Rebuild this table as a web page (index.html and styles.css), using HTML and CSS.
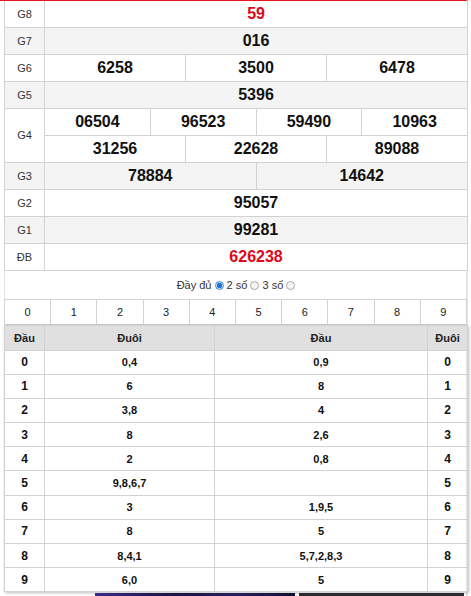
FILE: index.html
```html
<!DOCTYPE html>
<html lang="vi">
<head>
<meta charset="utf-8">
<title>KQ</title>
<link rel="stylesheet" href="styles.css">
</head>
<body>
<div class="wrap">
  <table class="kq">
    <colgroup>
      <col class="c-lbl">
      <col span="12" class="c-num">
    </colgroup>
    <tr class="w first"><td class="lbl">G8</td><td colspan="12" class="num red">59</td></tr>
    <tr class="g"><td class="lbl">G7</td><td colspan="12" class="num">016</td></tr>
    <tr class="w"><td class="lbl">G6</td><td colspan="4" class="num">6258</td><td colspan="4" class="num">3500</td><td colspan="4" class="num">6478</td></tr>
    <tr class="g"><td class="lbl">G5</td><td colspan="12" class="num">5396</td></tr>
    <tr class="w"><td class="lbl" rowspan="2">G4</td><td colspan="3" class="num">06504</td><td colspan="3" class="num">96523</td><td colspan="3" class="num">59490</td><td colspan="3" class="num">10963</td></tr>
    <tr class="w"><td colspan="4" class="num">31256</td><td colspan="4" class="num">22628</td><td colspan="4" class="num">89088</td></tr>
    <tr class="g"><td class="lbl">G3</td><td colspan="6" class="num">78884</td><td colspan="6" class="num">14642</td></tr>
    <tr class="w"><td class="lbl">G2</td><td colspan="12" class="num">95057</td></tr>
    <tr class="g"><td class="lbl">G1</td><td colspan="12" class="num">99281</td></tr>
    <tr class="w"><td class="lbl">ĐB</td><td colspan="12" class="num red">626238</td></tr>
  </table>

  <div class="opts">
    Đầy đủ <span class="radio on"></span> 2 số <span class="radio"></span> 3 số <span class="radio"></span>
  </div>

  <table class="digits">
    <tr><td>0</td><td>1</td><td>2</td><td>3</td><td>4</td><td>5</td><td>6</td><td>7</td><td>8</td><td>9</td></tr>
  </table>

  <table class="loto">
    <colgroup>
      <col class="l1"><col class="l2"><col class="l3"><col class="l4">
    </colgroup>
    <tr class="head"><th>Đầu</th><th>Đuôi</th><th>Đầu</th><th>Đuôi</th></tr>
    <tr><td class="k">0</td><td>0,4</td><td>0,9</td><td class="k">0</td></tr>
    <tr><td class="k">1</td><td>6</td><td>8</td><td class="k">1</td></tr>
    <tr><td class="k">2</td><td>3,8</td><td>4</td><td class="k">2</td></tr>
    <tr><td class="k">3</td><td>8</td><td>2,6</td><td class="k">3</td></tr>
    <tr><td class="k">4</td><td>2</td><td>0,8</td><td class="k">4</td></tr>
    <tr><td class="k">5</td><td>9,8,6,7</td><td></td><td class="k">5</td></tr>
    <tr><td class="k">6</td><td>3</td><td>1,9,5</td><td class="k">6</td></tr>
    <tr><td class="k">7</td><td>8</td><td>5</td><td class="k">7</td></tr>
    <tr><td class="k">8</td><td>8,4,1</td><td>5,7,2,8,3</td><td class="k">8</td></tr>
    <tr><td class="k">9</td><td>6,0</td><td>5</td><td class="k">9</td></tr>
  </table>
  <div class="banner"><span class="b1"></span><span class="b2"></span></div>
</div>
</body>
</html>
```
FILE: styles.css
```css
* { box-sizing: border-box; }
html, body { margin: 0; padding: 0; background: #fff; }
body { font-family: "Liberation Sans", Arial, sans-serif; color: #222; }

.wrap {
  width: 468px;
  border-top: 1px solid #e8141c;
  padding-left: 4px;
  border-right: 2px solid #e6e6e6;
}

table { border-collapse: collapse; table-layout: fixed; width: 463px; }
td, th { border: 1px solid #d2d2d2; padding: 0; text-align: center; }

.c-lbl { width: 40px; }
.c-num { width: 35.25px; }

.kq tr { height: 27px; }
.kq tr.first { height: 26px; }
.kq .w td { background: #fff; }
.kq .g td { background: #f4f4f4; }
.kq .lbl { font-size: 11px; color: #333; }
.kq .num { font-size: 16px; font-weight: bold; color: #111; }
.kq .red { color: #e0061b; }
.kq tr.first td { border-top: 0; }

.opts {
  height: 28px;
  line-height: 28px;
  text-align: center;
  font-size: 11px;
  color: #333;
  border-left: 1px solid #e4e4e4;
  width: 463px;
}
.radio {
  display: inline-block;
  width: 9px;
  height: 9px;
  border-radius: 50%;
  border: 1px solid #a9a9a9;
  background: #f4f4f4;
  vertical-align: -1px;
}
.radio.on {
  border-color: #3b8bd9;
  background: radial-gradient(circle, #1f74d1 0 2.5px, #cfe3f8 3px);
}

.digits tr { height: 25px; }
.digits td { font-size: 11px; color: #222; }

.loto { box-shadow: 1px 1px 3px rgba(0,0,0,0.25); }
.l1 { width: 40px; }
.l2 { width: 170px; }
.l3 { width: 213px; }
.l4 { width: 40px; }
.loto .head { height: 25px; }
.loto th { background: #e0e0e0; font-size: 11px; font-weight: bold; color: #222; }
.loto tr { height: 24.2px; }
.loto td { font-size: 11px; font-weight: bold; color: #111; }
.loto td.k { font-size: 12px; }

.banner { display: flex; margin-top: 1px; padding-left: 91px; height: 5px; gap: 4px; }
.b1 { width: 200px; background: linear-gradient(90deg, #3a2a8a, #1b1440 40%, #28205e 70%, #101030); }
.b2 { width: 165px; background: #2b2b2e; }
```
